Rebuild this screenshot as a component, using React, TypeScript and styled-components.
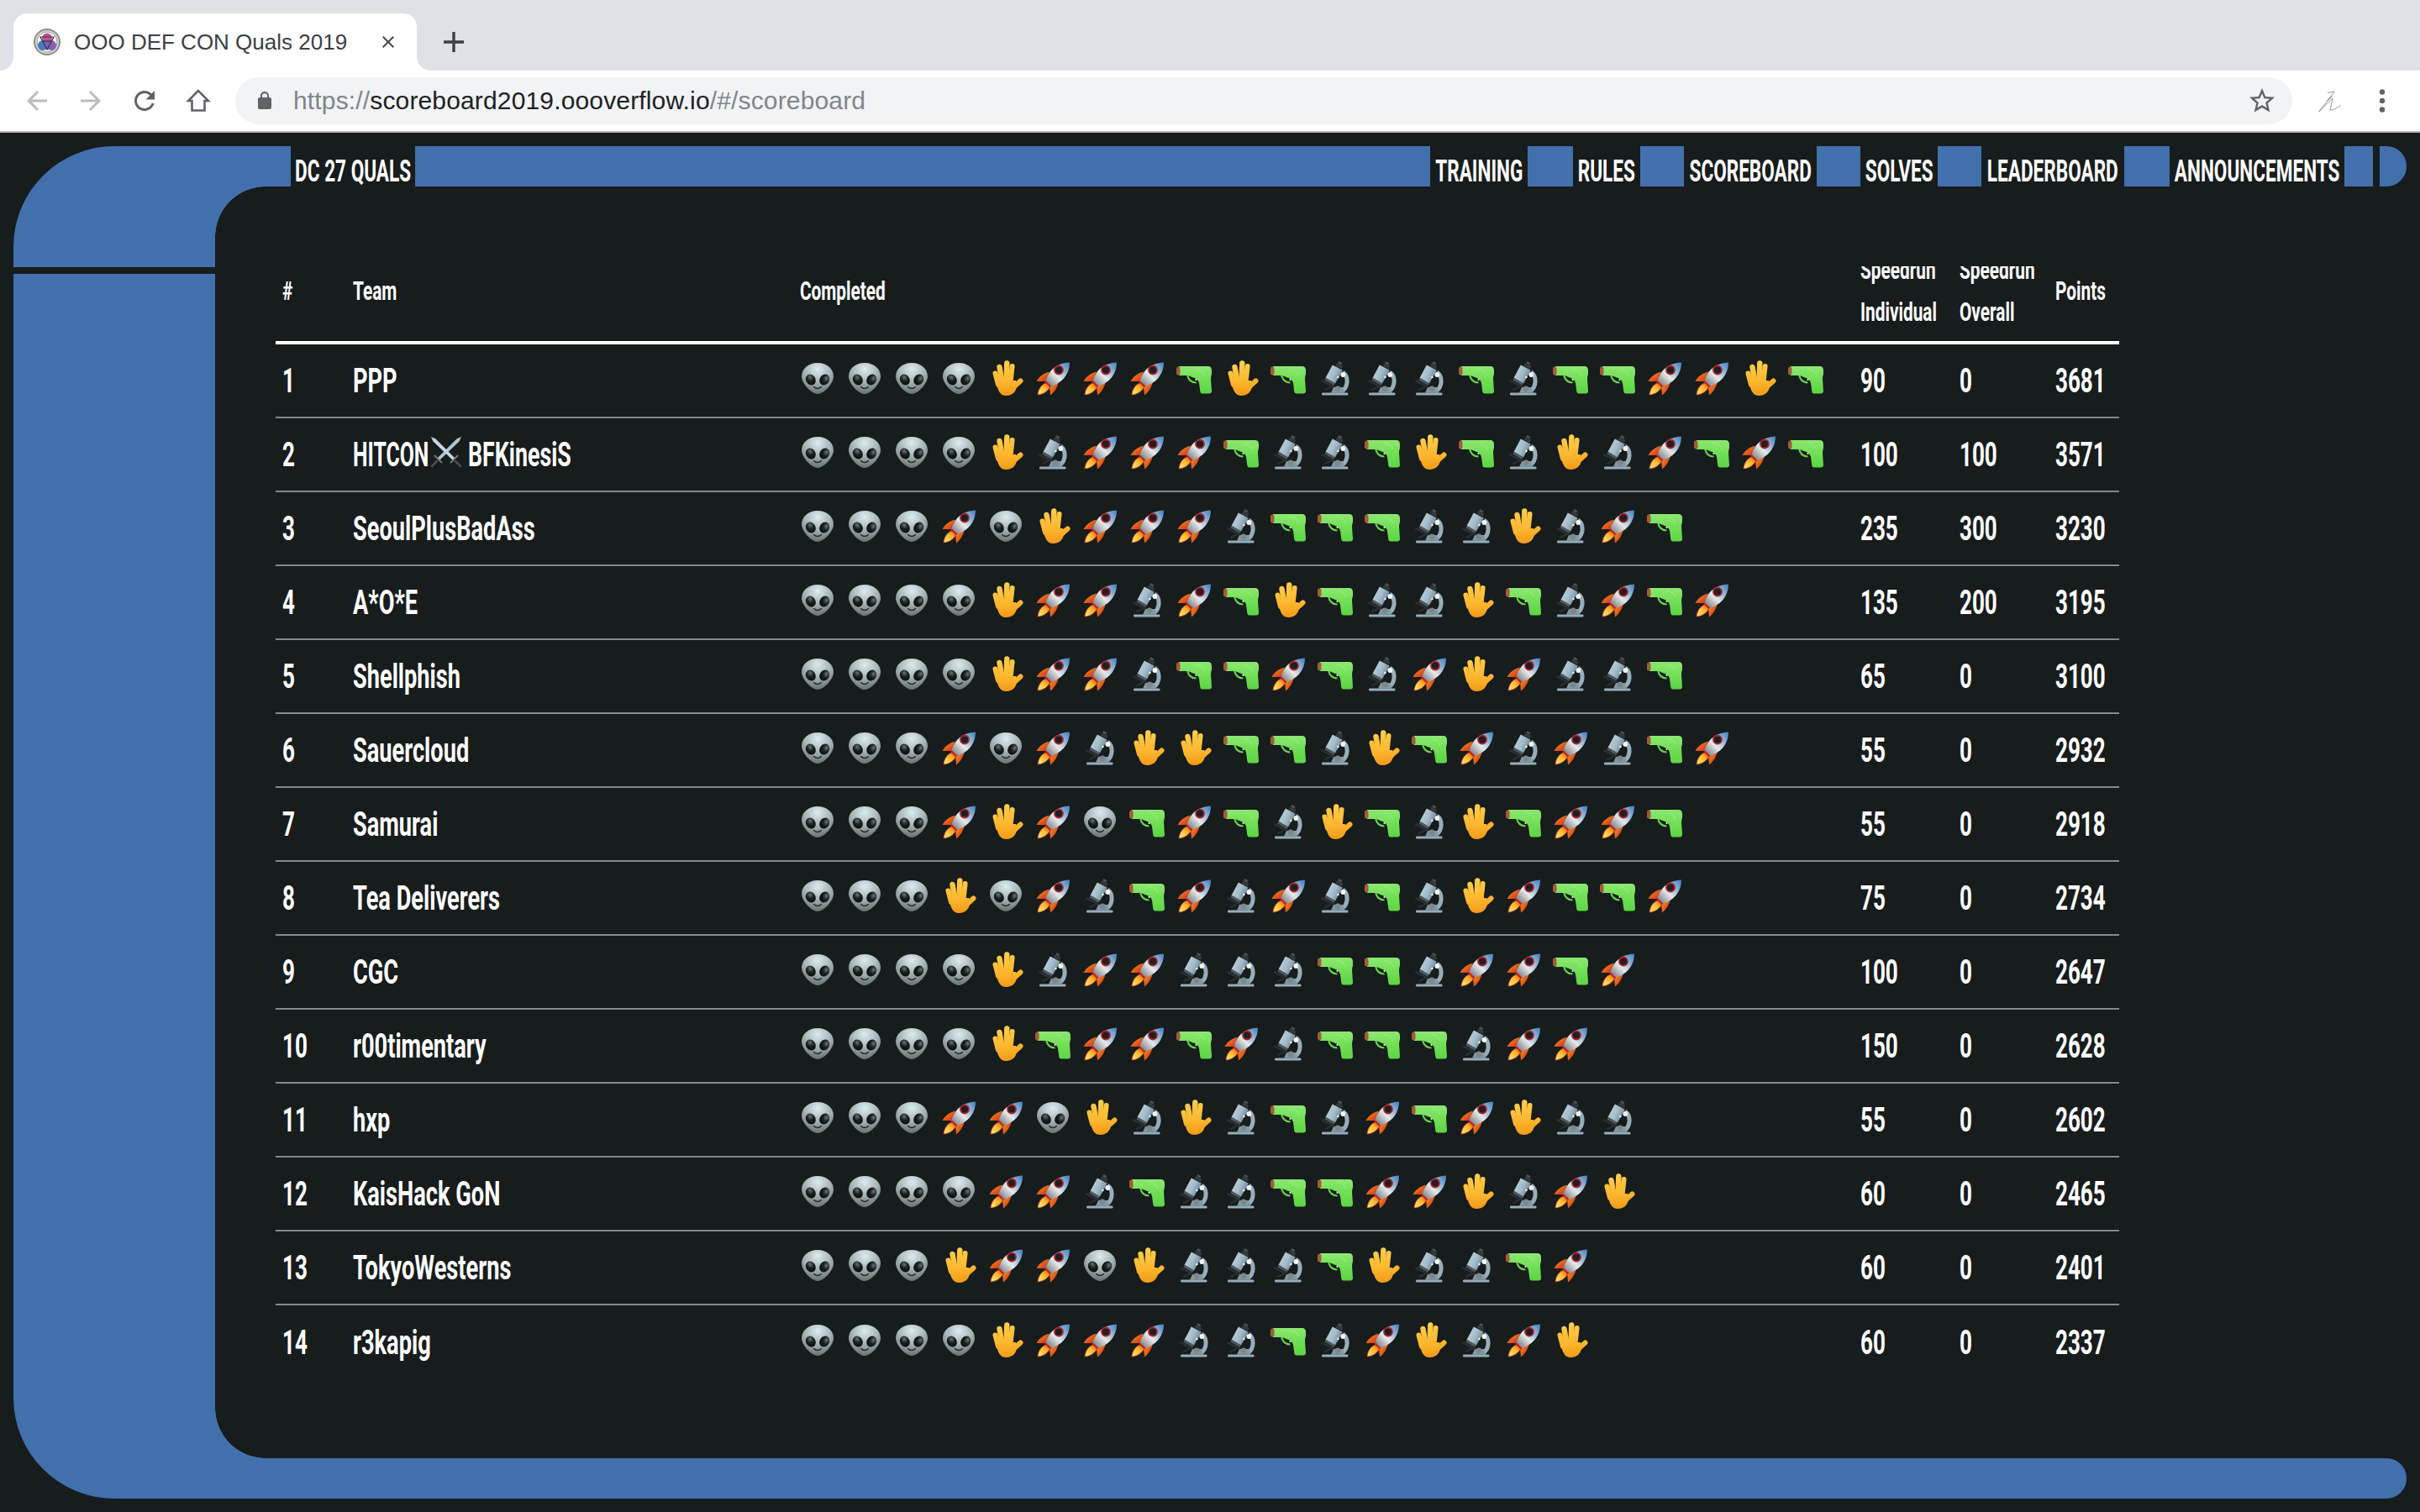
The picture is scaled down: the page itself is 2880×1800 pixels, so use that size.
import React from "react";
import styled, { createGlobalStyle } from "styled-components";

const BLUE = "#4270ad";
const DARK = "#171c1c";
const NARROW = 0.65;

const GlobalStyle = createGlobalStyle`
  html, body {
    margin: 0;
    padding: 0;
    background: ${DARK};
    overflow: hidden;
  }
  #root {
    width: 2880px;
    height: 1800px;
  }
`;

const Page = styled.div`
  display: flex;
  flex-direction: column;
  height: 1800px;
`;

/* browser chrome */
const TabStrip = styled.div`
  display: flex;
  align-items: flex-end;
  height: 84px;
  padding-left: 16px;
  background: #dee1e6;
  box-sizing: border-box;
`;

const Tab = styled.div`
  position: relative;
  display: flex;
  align-items: center;
  width: 480px;
  height: 68px;
  padding: 0 22px 0 24px;
  box-sizing: border-box;
  background: #fff;
  border-radius: 16px 16px 0 0;

  &::before,
  &::after {
    content: "";
    position: absolute;
    bottom: 0;
    width: 16px;
    height: 16px;
  }
  &::before {
    left: -16px;
    background: radial-gradient(circle at 0 0, transparent 15.5px, #fff 16px);
  }
  &::after {
    right: -16px;
    background: radial-gradient(circle at 100% 0, transparent 15.5px, #fff 16px);
  }
`;

const TabTitle = styled.span`
  flex: 1;
  margin-left: 16px;
  font: 400 26px "Liberation Sans", Arial, sans-serif;
  color: #3c4043;
  white-space: nowrap;
`;

const NewTab = styled.svg`
  width: 26px;
  height: 26px;
  margin: 0 0 21px 31px;
`;

const Toolbar = styled.div`
  display: flex;
  align-items: center;
  height: 74px;
  padding: 0 14px 0 12px;
  background: #fff;
  border-bottom: 2px solid #b9b9b9;
  box-sizing: border-box;
`;

const ToolButton = styled.div<{ $w?: number }>`
  display: flex;
  align-items: center;
  justify-content: center;
  width: ${(p) => p.$w ?? 64}px;
  height: 56px;
  flex: none;
`;

const AddressBar = styled.div`
  display: flex;
  align-items: center;
  flex: 1;
  height: 56px;
  margin: 0 14px 0 12px;
  padding: 0 18px 0 23px;
  background: #f1f3f4;
  border-radius: 28px;
`;

const Url = styled.div`
  flex: 1;
  margin-left: 22px;
  font: 400 30px "Liberation Sans", Arial, sans-serif;
  letter-spacing: 0.15px;
  color: #80868b;
  white-space: nowrap;
`;

const Host = styled.span`
  color: #202124;
`;

/* lcars frame */
const Viewport = styled.div`
  flex: 1;
  padding: 16px;
  background: ${DARK};
  min-height: 0;
`;

const Frame = styled.div`
  display: grid;
  grid-template-columns: 240px 1fr;
  grid-template-rows: 48px 1fr 48px;
  height: 100%;
`;

const Sidebar = styled.div`
  grid-row: 1 / 4;
  display: flex;
  flex-direction: column;
  gap: 8px;
`;

const SideTop = styled.div`
  height: 144px;
  background: ${BLUE};
  border-top-left-radius: 120px;
`;

const SideBottom = styled.div`
  flex: 1;
  background: ${BLUE};
  border-bottom-left-radius: 120px;
`;

const TopBar = styled.nav`
  display: flex;
  align-items: stretch;
`;

const BarPiece = styled.div<{ $w?: number }>`
  flex: ${(p) => (p.$w ? `0 0 ${p.$w}px` : "1")};
  background: ${BLUE};
`;

const BarCap = styled.div`
  flex: 0 0 32px;
  margin-left: 8px;
  background: ${BLUE};
  border-radius: 0 24px 24px 0 / 0 24px 24px 0;
`;

const NavLink = styled.div<{ $w: number }>`
  flex: 0 0 ${(p) => p.$w}px;
  min-width: 0;
  display: flex;
  justify-content: center;
  padding-top: 9px;
  box-sizing: border-box;
  background: ${DARK};
  font: 700 37px/41px Roboto, sans-serif;
  color: #fff;
  white-space: nowrap;
`;

const NavLabel = styled.span`
  display: inline-block;
  flex: none;
  transform: scaleX(0.61);
`;

const Panel = styled.main`
  position: relative;
  padding: 95px 0 0 72px;
  background: ${DARK};

  &::before,
  &::after {
    content: "";
    position: absolute;
    left: 0;
    width: 60px;
    height: 60px;
  }
  &::before {
    top: 0;
    background: radial-gradient(circle at 60px 60px, transparent 59.5px, ${BLUE} 60px);
  }
  &::after {
    bottom: 0;
    background: radial-gradient(circle at 60px 0, transparent 59.5px, ${BLUE} 60px);
  }
`;

const BottomBar = styled.div`
  background: ${BLUE};
  border-radius: 0 24px 24px 0;
`;

/* scoreboard */
const COLUMNS = "84px 532px 1262px 118px 114px 84px";

const Board = styled.div`
  width: 2194px;
  color: #fff;
`;

const HeadRow = styled.div`
  display: grid;
  grid-template-columns: ${COLUMNS};
  grid-template-rows: 100px;
  align-content: end;
  height: 93px;
  padding-bottom: 10px;
  overflow: hidden;
  box-sizing: border-box;
  border-bottom: 4px solid #fff;
`;

const HeadCell = styled.div`
  display: flex;
  flex-direction: column;
  justify-content: center;
  align-items: flex-start;
  height: 100px;
  padding-left: 8px;
  font: 700 32px/50px Roboto, sans-serif;
  white-space: nowrap;
`;

const Row = styled.div`
  display: grid;
  grid-template-columns: ${COLUMNS};
  align-items: center;
  height: 88px;
  box-sizing: border-box;
  border-bottom: 2px solid #888;

  &:last-child {
    border-bottom: 0;
  }
`;

const Cell = styled.div`
  display: flex;
  align-items: center;
  padding: 2px 0 0 8px;
  font: 700 40px/48px Roboto, sans-serif;
  white-space: nowrap;
`;

const Narrow = styled.span<{ $w?: number; $scale?: number }>`
  display: inline-block;
  ${(p) => (p.$w ? `width: ${p.$w}px;` : "")}
  transform: scaleX(${(p) => p.$scale ?? NARROW});
  transform-origin: left center;
`;

const Swords = styled.svg`
  flex: none;
  width: 38px;
  height: 38px;
  margin: -8px 7px 0 3px;
`;

const Solves = styled.div`
  display: flex;
  gap: 14px;
  margin-top: -2px;
`;

const Emoji = styled.svg`
  flex: none;
  width: 42px;
  height: 48px;
`;

const Sprites = styled.svg`
  position: absolute;
  width: 0;
  height: 0;
`;

const EmojiSprites = () => (
  <Sprites aria-hidden="true">
    <defs>
      <radialGradient id="alienSkin" cx="50%" cy="20%" r="75%">
        <stop offset="0" stopColor="#dbebee" />
        <stop offset="0.55" stopColor="#a5b5b7" />
        <stop offset="1" stopColor="#6d7a7b" />
      </radialGradient>
      <radialGradient id="alienEye" cx="60%" cy="30%" r="70%">
        <stop offset="0" stopColor="#6b7375" />
        <stop offset="0.5" stopColor="#1c2021" />
        <stop offset="1" stopColor="#0c0e0f" />
      </radialGradient>
      <linearGradient id="handSkin" gradientUnits="userSpaceOnUse" x1="20" y1="0" x2="24" y2="42">
        <stop offset="0" stopColor="#fdd04c" />
        <stop offset="0.6" stopColor="#fcb62e" />
        <stop offset="1" stopColor="#f39a17" />
      </linearGradient>
      <linearGradient id="rocketBody" x1="1" y1="0" x2="0" y2="1">
        <stop offset="0" stopColor="#3f7fc0" />
        <stop offset="0.28" stopColor="#8db4d6" />
        <stop offset="0.55" stopColor="#e6e9ea" />
        <stop offset="0.85" stopColor="#8b8f92" />
        <stop offset="1" stopColor="#4d5154" />
      </linearGradient>
      <linearGradient id="rocketFin" x1="0" y1="0" x2="1" y2="1">
        <stop offset="0" stopColor="#f5a21a" />
        <stop offset="1" stopColor="#d8201c" />
      </linearGradient>
      <linearGradient id="rocketFlame" x1="0" y1="1" x2="1" y2="0">
        <stop offset="0" stopColor="#fff08a" />
        <stop offset="0.6" stopColor="#fcb52a" />
        <stop offset="1" stopColor="#e2461b" />
      </linearGradient>
      <linearGradient id="gunBody" x1="0" y1="0" x2="0" y2="1">
        <stop offset="0" stopColor="#8ce872" />
        <stop offset="0.45" stopColor="#73e057" />
        <stop offset="1" stopColor="#5cd544" />
      </linearGradient>
      <linearGradient id="scopeTube" x1="0" y1="0" x2="1" y2="0.5">
        <stop offset="0" stopColor="#c6d6de" />
        <stop offset="0.6" stopColor="#a3bccb" />
        <stop offset="1" stopColor="#6f8896" />
      </linearGradient>
    </defs>

    <symbol id="emoji-a" viewBox="0 0 42 48">
      <path d="M21 3C32 3 40 10 40 19C40 28 28 40 21 40C14 40 2 28 2 19C2 10 10 3 21 3Z" fill="url(#alienSkin)" />
      <ellipse cx="12.8" cy="23" rx="5.6" ry="6.8" transform="rotate(-35 12.8 23)" fill="url(#alienEye)" />
      <ellipse cx="29.2" cy="23" rx="5.6" ry="6.8" transform="rotate(35 29.2 23)" fill="url(#alienEye)" />
      <path d="M16.5 31.5Q21 35.5 25.5 31.5" fill="none" stroke="#23292a" strokeWidth="1.4" strokeLinecap="round" />
    </symbol>

    <symbol id="emoji-h" viewBox="0 0 42 48">
      <g fill="none" stroke="url(#handSkin)" strokeLinecap="round">
        <path d="M8.5 15.5L12 29" strokeWidth="6" />
        <path d="M13.5 8L17 28" strokeWidth="6.4" />
        <path d="M22.3 3.5L21.5 26" strokeWidth="6.4" />
        <path d="M28.6 7L26.5 26" strokeWidth="6" />
        <path d="M29 33L38.5 24.5" strokeWidth="6" />
      </g>
      <path d="M9.5 24L33 24L34 31C33 38 28 42 21.5 42C14 42 11 36 9.5 24Z" fill="url(#handSkin)" />
    </symbol>

    <symbol id="emoji-r" viewBox="0 0 42 48">
      <path d="M1.5 25C4 20 10 15 17 13.5L12 25Z" fill="url(#rocketFin)" />
      <path d="M28 24.5C27 31 23 38 18 41.5L17 30Z" fill="url(#rocketFin)" />
      <path d="M3 41C3.5 34 8 28 13 27L17.5 31.5C16 36 10 40.5 3 41Z" fill="url(#rocketFlame)" stroke="#d6361a" strokeWidth="0.8" />
      <path d="M41 2.5C33 2.5 24.5 6 19 12C15.5 16 13.5 21 12 25L18.5 31.5C23 29.5 29.5 26.5 34 21.5C39 15.5 41 9 41 2.5Z" fill="url(#rocketBody)" />
      <path d="M12 25L18.5 31.5" stroke="#c9201d" strokeWidth="2.2" />
      <circle cx="28" cy="11.5" r="5" fill="#1c2023" stroke="#b4232a" strokeWidth="1.8" />
    </symbol>

    <symbol id="emoji-g" viewBox="0 0 42 48">
      <path d="M13 17Q15 26.5 23.5 26.5" fill="none" stroke="#63d64a" strokeWidth="2.2" />
      <path d="M3 7H37.5Q42 7 42 12V16.5Q41 19 41 22L42 36.5Q42 39.5 39 39.5H31Q28.5 39.5 28.3 37L27 27Q26 22 20 20.5L14 18H3Z" fill="url(#gunBody)" />
      <rect x="0" y="7.5" width="4.5" height="10" rx="2.2" fill="#a65a3a" />
      <circle cx="23.5" cy="23" r="1.1" fill="#f2f7ef" />
      <path d="M23 10Q31 11 34 18" fill="none" stroke="#a4ee8c" strokeWidth="0.8" />
    </symbol>

    <symbol id="emoji-m" viewBox="0 0 42 48">
      <path d="M30 14C37 19 37 31 29 37" fill="none" stroke="#97aebb" strokeWidth="5" />
      <rect x="5" y="38.4" width="31.5" height="3.2" rx="1.4" fill="#94aebd" />
      <path d="M16 38.8L19 32H30L32.5 38.8Z" fill="#8299a6" />
      <circle cx="24" cy="34" r="3.4" fill="#7f878a" />
      <path d="M5.4 24.6L18.8 31" stroke="#2b2f31" strokeWidth="2.8" strokeLinecap="round" />
      <path d="M9 35L19 30" stroke="#2b2f31" strokeWidth="2.2" strokeLinecap="round" />
      <path d="M17.8 5.4L29.8 11.8L21 27.4L9.6 20.8Z" fill="url(#scopeTube)" />
      <path d="M9.6 20.8L21 27.4L19 29.6L8.4 23.4Z" fill="#4c5961" />
      <path d="M23.5 3L30.5 6.8L28.6 10.6L21.4 6.8Z" fill="#33383b" />
      <path d="M25.5 1L29.5 3.2L28 5.4L24.2 3.2Z" fill="#4b5155" />
      <circle cx="30.3" cy="17" r="2.9" fill="#f5f7f8" />
      <circle cx="24.4" cy="20" r="1.2" fill="#f5f7f8" />
    </symbol>
  </Sprites>
);

const Favicon = () => (
  <svg width="32" height="32" viewBox="0 0 32 32">
    <circle cx="16" cy="16" r="15" fill="#d5d5d5" stroke="#8e8e8e" strokeWidth="2" />
    <circle cx="16" cy="16" r="12" fill="#fff" stroke="#9a9a9a" />
    <circle cx="16" cy="11.5" r="6" fill="#c0508f" />
    <circle cx="11" cy="20" r="6" fill="#4a78c4" />
    <circle cx="21" cy="20" r="6" fill="#8a5bb5" />
    <path d="M8 10H24L16 25Z" fill="none" stroke="#33363a" strokeWidth="1.2" />
    <path d="M11 15H21" stroke="#33363a" strokeWidth="1.2" />
  </svg>
);

const Icon = ({ d, size = 36, color = "#5f6368" }: { d: string; size?: number; color?: string }) => (
  <svg width={size} height={size} viewBox="0 0 24 24" fill={color}>
    <path d={d} />
  </svg>
);

const SwordsIcon = () => (
  <Swords viewBox="0 0 38 38">
    <defs>
      <linearGradient id="blade" x1="0" y1="0" x2="1" y2="1">
        <stop offset="0" stopColor="#d4e6f2" />
        <stop offset="1" stopColor="#8ea3b1" />
      </linearGradient>
    </defs>
    <path d="M37 1L34.5 6.5L11 29L8.5 26.5L31.5 3.5Z" fill="url(#blade)" />
    <path d="M1 1L6.5 3.5L29.5 26.5L27 29L3.5 6.5Z" fill="#c4d6e2" />
    <path d="M5 23L14 32M33 23L24 32" stroke="#77797c" strokeWidth="2" />
    <path d="M8 30L2 36M30 30L36 36" stroke="#4a4d50" strokeWidth="2.6" strokeLinecap="round" />
  </Swords>
);

const navItems: { label: string; w: number; spacer: number }[] = [
  { label: "TRAINING", w: 116, spacer: 54 },
  { label: "RULES", w: 80, spacer: 52 },
  { label: "SCOREBOARD", w: 158, spacer: 52 },
  { label: "SOLVES", w: 92, spacer: 52 },
  { label: "LEADERBOARD", w: 170, spacer: 54 },
  { label: "ANNOUNCEMENTS", w: 208, spacer: 34 },
];

const teams: [string, string, number, number, number][] = [
  ["PPP", "aaaahrrrghgmmmgmggrrhg", 90, 0, 3681],
  ["HITCON⚔BFKinesiS", "aaaahmrrrgmmghgmhmrgrg", 100, 100, 3571],
  ["SeoulPlusBadAss", "aaarahrrrmgggmmhmrg", 235, 300, 3230],
  ["A*O*E", "aaaahrrmrghgmmhgmrgr", 135, 200, 3195],
  ["Shellphish", "aaaahrrmggrgmrhrmmg", 65, 0, 3100],
  ["Sauercloud", "aaararmhhggmhgrmrmgr", 55, 0, 2932],
  ["Samurai", "aaarhragrgmhgmhgrrg", 55, 0, 2918],
  ["Tea Deliverers", "aaaharmgrmrmgmhrggr", 75, 0, 2734],
  ["CGC", "aaaahmrrmmmggmrrgr", 100, 0, 2647],
  ["r00timentary", "aaaahgrrgrmgggmrr", 150, 0, 2628],
  ["hxp", "aaarrahmhmgmrgrhmm", 55, 0, 2602],
  ["KaisHack GoN", "aaaarrmgmmggrrhmrh", 60, 0, 2465],
  ["TokyoWesterns", "aaahrrahmmmghmmgr", 60, 0, 2401],
  ["r3kapig", "aaaahrrrmmgmrhmrh", 60, 0, 2337],
];

const TeamName = ({ name }: { name: string }) => {
  const parts = name.split("⚔");
  if (parts.length === 1) return <Narrow $scale={0.68}>{name}</Narrow>;
  return (
    <>
      <Narrow $w={89} $scale={0.62}>
        {parts[0]}
      </Narrow>
      <SwordsIcon />
      <Narrow $scale={0.67}>{parts[1]}</Narrow>
    </>
  );
};

const App = () => {
  return (
    <Page>
      <GlobalStyle />
      <EmojiSprites />
      <TabStrip>
        <Tab>
          <Favicon />
          <TabTitle>OOO DEF CON Quals 2019</TabTitle>
          <Icon
            size={24}
            color="#45494d"
            d="M19 6.41L17.59 5 12 10.59 6.41 5 5 6.41 10.59 12 5 17.59 6.41 19 12 13.41 17.59 19 19 17.59 13.41 12z"
          />
        </Tab>
        <NewTab viewBox="0 0 26 26">
          <path d="M13 1V25M1 13H25" stroke="#3c4043" strokeWidth="3.4" />
        </NewTab>
      </TabStrip>
      <Toolbar>
        <ToolButton>
          <Icon color="#b9bcc0" d="M20 11H7.83l5.59-5.59L12 4l-8 8 8 8 1.41-1.41L7.83 13H20v-2z" />
        </ToolButton>
        <ToolButton>
          <Icon color="#b9bcc0" d="M12 4l-1.41 1.41L16.17 11H4v2h12.17l-5.58 5.59L12 20l8-8z" />
        </ToolButton>
        <ToolButton>
          <Icon d="M17.65 6.35C16.2 4.9 14.21 4 12 4c-4.42 0-7.99 3.58-7.99 8s3.57 8 7.99 8c3.73 0 6.84-2.55 7.73-6h-2.08c-.82 2.33-3.04 4-5.65 4-3.31 0-6-2.69-6-6s2.69-6 6-6c1.66 0 3.14.69 4.22 1.78L13 11h7V4l-2.35 2.35z" />
        </ToolButton>
        <ToolButton>
          <svg width="30" height="30" viewBox="0 0 30 30" fill="none" stroke="#5f6368" strokeWidth="2.6">
            <path d="M15 3L3 15H7.5V26.5H22.5V15H27Z" />
          </svg>
        </ToolButton>
        <AddressBar>
          <Icon
            size={24}
            d="M18 8h-1V6c0-2.76-2.24-5-5-5S7 3.24 7 6v2H6c-1.1 0-2 .9-2 2v10c0 1.1.9 2 2 2h12c1.1 0 2-.9 2-2V10c0-1.1-.9-2-2-2zM9 6c0-1.66 1.34-3 3-3s3 1.34 3 3v2H9V6z"
          />
          <Url>
            https://<Host>scoreboard2019.oooverflow.io</Host>/#/scoreboard
          </Url>
          <Icon d="M22 9.24l-7.19-.62L12 2 9.19 8.63 2 9.24l5.46 4.73L5.82 21 12 17.27 18.18 21l-1.63-7.03L22 9.24zM12 15.4l-3.76 2.27 1-4.28-3.32-2.88 4.38-.38L12 6.1l1.71 4.04 4.38.38-3.32 2.88 1 4.28L12 15.4z" />
        </AddressBar>
        <ToolButton $w={62}>
          <svg width="30" height="28" viewBox="0 0 30 28" fill="none" stroke="#8a8a8a" strokeWidth="0.9">
            <path d="M12 4.5L20 3L11 15L17 9L15 10L1.5 27L18 11L15 25C20 25 24 22 28 19" />
          </svg>
        </ToolButton>
        <ToolButton $w={62}>
          <svg width="8" height="28" viewBox="0 0 8 28" fill="#5f6368">
            <circle cx="4" cy="3.5" r="3.2" />
            <circle cx="4" cy="14" r="3.2" />
            <circle cx="4" cy="24.5" r="3.2" />
          </svg>
        </ToolButton>
      </Toolbar>

      <Viewport>
        <Frame>
          <Sidebar>
            <SideTop />
            <SideBottom />
          </Sidebar>
          <TopBar>
            <BarPiece $w={90} />
            <NavLink $w={148}>
              <NavLabel>DC 27 QUALS</NavLabel>
            </NavLink>
            <BarPiece />
            {navItems.map((item) => (
              <React.Fragment key={item.label}>
                <NavLink $w={item.w}>
                  <NavLabel>{item.label}</NavLabel>
                </NavLink>
                <BarPiece $w={item.spacer} />
              </React.Fragment>
            ))}
            <BarCap />
          </TopBar>
          <Panel>
            <Board>
              <HeadRow>
                <HeadCell>
                  <Narrow>#</Narrow>
                </HeadCell>
                <HeadCell>
                  <Narrow>Team</Narrow>
                </HeadCell>
                <HeadCell>
                  <Narrow>Completed</Narrow>
                </HeadCell>
                <HeadCell>
                  <Narrow>Speedrun</Narrow>
                  <Narrow>Individual</Narrow>
                </HeadCell>
                <HeadCell>
                  <Narrow>Speedrun</Narrow>
                  <Narrow>Overall</Narrow>
                </HeadCell>
                <HeadCell>
                  <Narrow>Points</Narrow>
                </HeadCell>
              </HeadRow>
              {teams.map(([name, solves, individual, overall, points], i) => (
                <Row key={name}>
                  <Cell>
                    <Narrow>{i + 1}</Narrow>
                  </Cell>
                  <Cell>
                    <TeamName name={name} />
                  </Cell>
                  <Cell>
                    <Solves>
                      {solves.split("").map((kind, j) => (
                        <Emoji key={j}>
                          <use href={`#emoji-${kind}`} />
                        </Emoji>
                      ))}
                    </Solves>
                  </Cell>
                  <Cell>
                    <Narrow>{individual}</Narrow>
                  </Cell>
                  <Cell>
                    <Narrow>{overall}</Narrow>
                  </Cell>
                  <Cell>
                    <Narrow>{points}</Narrow>
                  </Cell>
                </Row>
              ))}
            </Board>
          </Panel>
          <BottomBar />
        </Frame>
      </Viewport>
    </Page>
  );
};

export default App;
